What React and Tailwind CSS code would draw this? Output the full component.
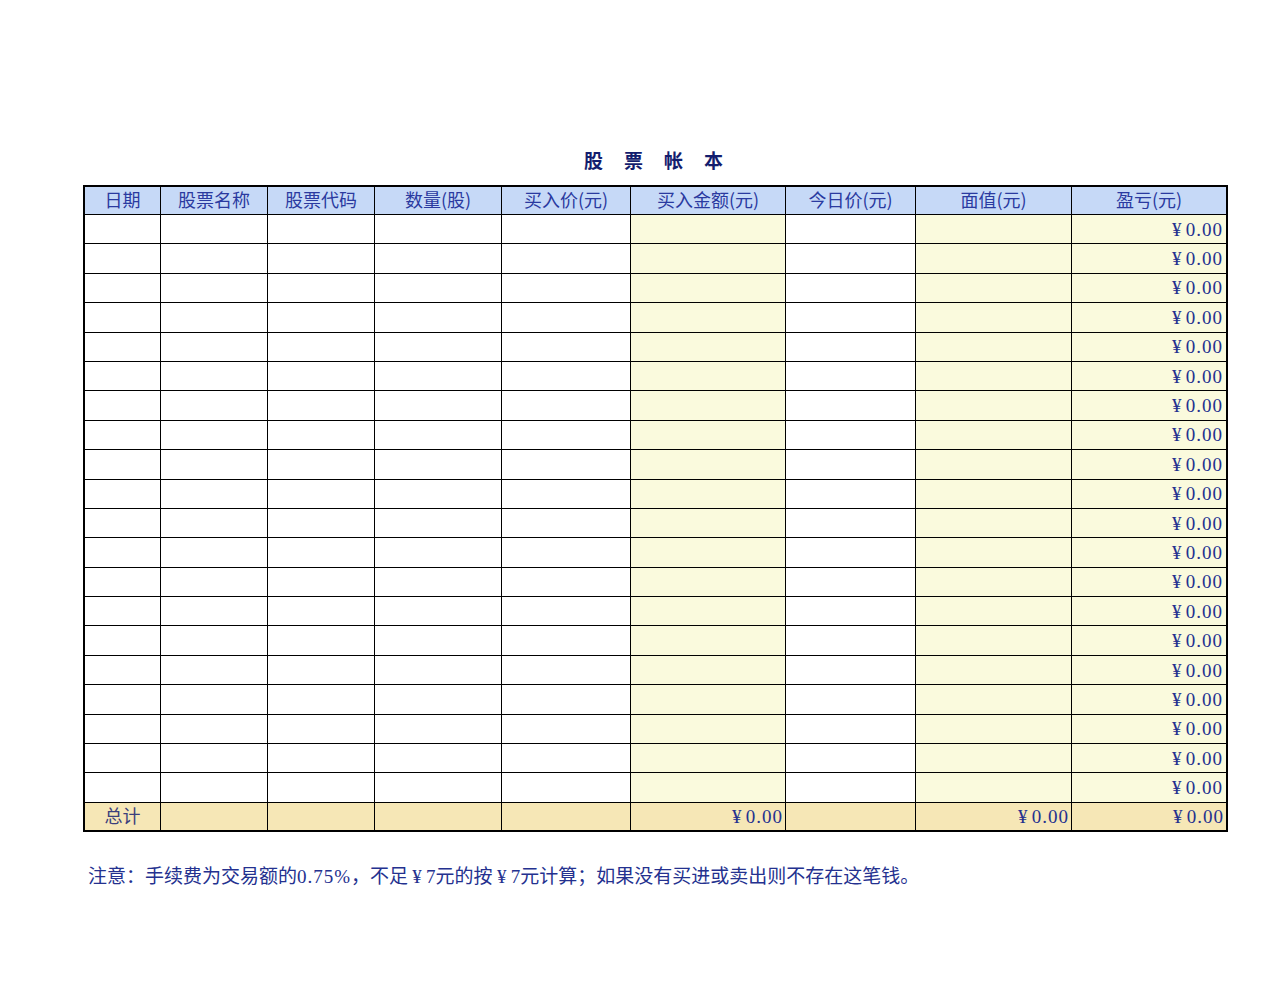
import React from 'react';

const columns = [
  { title: '日期', w: 'w-[75px]', bg: 'bg-white' },
  { title: '股票名称', w: 'w-[106px]', bg: 'bg-white' },
  { title: '股票代码', w: 'w-[106px]', bg: 'bg-white' },
  { title: '数量(股)', w: 'w-[126px]', bg: 'bg-white' },
  { title: '买入价(元)', w: 'w-[128px]', bg: 'bg-white' },
  { title: '买入金额(元)', w: 'w-[154px]', bg: 'bg-[#fafadd]' },
  { title: '今日价(元)', w: 'w-[129px]', bg: 'bg-white' },
  { title: '面值(元)', w: 'w-[155px]', bg: 'bg-[#fafadd]' },
  { title: '盈亏(元)', w: 'w-[154px]', bg: 'bg-[#fafadd]' },
];

const rows = Array.from({ length: 20 });

// SimSun-ish half-width digits
const num = "font-['Liberation_Serif',serif] text-[19px]";

// full-width yen sign, like the spreadsheet's ￥
const Yen = () => (
  <span className={`${num} inline-block w-[18px] text-center`}>¥</span>
);

const Money = () => (
  <span className="flex items-baseline leading-none">
    <Yen />
    <span className={`${num} tracking-[1px]`}>0.00</span>
  </span>
);

export default function App() {
  const font = "font-['Noto_Sans_CJK_SC',sans-serif]";
  return (
    <div className={`min-h-[995px] w-[1280px] bg-white pt-[142px] text-[#24318f] ${font}`}>
      <div className="ml-[81px] h-[36px] w-[1145px] pl-[21px] text-center text-[19px] font-bold leading-[36px] tracking-[21px] text-[#131d6e]">
        股票帐本
      </div>

      <div className="mt-[7px] ml-[83px] w-[1145px] border-2 border-black">
        <div className="flex flex-col gap-px bg-black">
          {/* header */}
          <div className="flex h-[27px] gap-px">
            {columns.map((c) => (
              <div
                key={c.title}
                className={`${c.w} flex shrink-0 items-center justify-center bg-[#c6d9f7] pb-[4px] text-[18px] leading-none text-[#2a3aa0]`}
              >
                {c.title}
              </div>
            ))}
          </div>

          {rows.map((_, r) => (
            <div key={r} className="flex h-[28.4px] gap-px">
              {columns.map((c, i) => (
                <div
                  key={i}
                  className={`${c.w} ${c.bg} flex shrink-0 items-center justify-end pr-[3px] leading-none`}
                >
                  {i === 8 && <Money />}
                </div>
              ))}
            </div>
          ))}

          {/* total */}
          <div className="flex h-[27px] gap-px">
            {columns.map((c, i) => (
              <div
                key={i}
                className={`${c.w} flex shrink-0 items-center bg-[#f6e7b6] leading-none ${
                  i === 0 ? 'justify-center pb-[2px] text-[18px] text-[#3b3f7c]' : 'justify-end pr-[2px]'
                }`}
              >
                {i === 0 && '总计'}
                {(i === 5 || i === 7 || i === 8) && <Money />}
              </div>
            ))}
          </div>
        </div>
      </div>

      <p className="mt-[28px] ml-[88px] text-[19px] leading-[30px] text-[#24318f]">
        注意：手续费为交易额的<span className={`${num} tracking-[1px]`}>0.75%</span>，不足<Yen /><span className={num}>7</span>元的按<Yen /><span className={num}>7</span>元计算；如果没有买进或卖出则不存在这笔钱。
      </p>
    </div>
  );
}
